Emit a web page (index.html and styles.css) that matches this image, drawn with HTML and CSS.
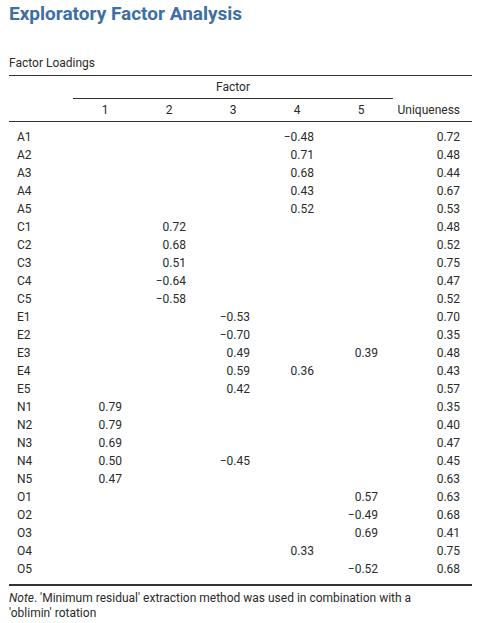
FILE: index.html
```html
<!DOCTYPE html>
<html lang="en">
<head>
    <meta charset="UTF-8">
    <meta name="viewport" content="width=device-width, initial-scale=1.0">
    <title>Exploratory Factor Analysis</title>
    <link rel="stylesheet" href="styles.css">
</head>
<body>
    <div class="analysis">
        <h1 class="title">Exploratory Factor Analysis</h1>
        <div class="caption">Factor Loadings</div>
        <table class="loadings">
            <colgroup>
                <col class="col-label">
                <col class="col-factor"><col class="col-factor"><col class="col-factor"><col class="col-factor"><col class="col-factor">
                <col class="col-uniq">
            </colgroup>
            <thead>
                <tr class="group-row">
                    <th></th>
                    <th colspan="5" class="group">Factor</th>
                    <th></th>
                </tr>
                <tr class="head-row">
                    <th></th>
                    <th>1</th><th>2</th><th>3</th><th>4</th><th>5</th>
                    <th>Uniqueness</th>
                </tr>
            </thead>
            <tbody>
                <tr><td>A1</td><td></td><td></td><td></td><td>−0.48</td><td></td><td>0.72</td></tr>
                <tr><td>A2</td><td></td><td></td><td></td><td>0.71</td><td></td><td>0.48</td></tr>
                <tr><td>A3</td><td></td><td></td><td></td><td>0.68</td><td></td><td>0.44</td></tr>
                <tr><td>A4</td><td></td><td></td><td></td><td>0.43</td><td></td><td>0.67</td></tr>
                <tr><td>A5</td><td></td><td></td><td></td><td>0.52</td><td></td><td>0.53</td></tr>
                <tr><td>C1</td><td></td><td>0.72</td><td></td><td></td><td></td><td>0.48</td></tr>
                <tr><td>C2</td><td></td><td>0.68</td><td></td><td></td><td></td><td>0.52</td></tr>
                <tr><td>C3</td><td></td><td>0.51</td><td></td><td></td><td></td><td>0.75</td></tr>
                <tr><td>C4</td><td></td><td>−0.64</td><td></td><td></td><td></td><td>0.47</td></tr>
                <tr><td>C5</td><td></td><td>−0.58</td><td></td><td></td><td></td><td>0.52</td></tr>
                <tr><td>E1</td><td></td><td></td><td>−0.53</td><td></td><td></td><td>0.70</td></tr>
                <tr><td>E2</td><td></td><td></td><td>−0.70</td><td></td><td></td><td>0.35</td></tr>
                <tr><td>E3</td><td></td><td></td><td>0.49</td><td></td><td>0.39</td><td>0.48</td></tr>
                <tr><td>E4</td><td></td><td></td><td>0.59</td><td>0.36</td><td></td><td>0.43</td></tr>
                <tr><td>E5</td><td></td><td></td><td>0.42</td><td></td><td></td><td>0.57</td></tr>
                <tr><td>N1</td><td>0.79</td><td></td><td></td><td></td><td></td><td>0.35</td></tr>
                <tr><td>N2</td><td>0.79</td><td></td><td></td><td></td><td></td><td>0.40</td></tr>
                <tr><td>N3</td><td>0.69</td><td></td><td></td><td></td><td></td><td>0.47</td></tr>
                <tr><td>N4</td><td>0.50</td><td></td><td>−0.45</td><td></td><td></td><td>0.45</td></tr>
                <tr><td>N5</td><td>0.47</td><td></td><td></td><td></td><td></td><td>0.63</td></tr>
                <tr><td>O1</td><td></td><td></td><td></td><td></td><td>0.57</td><td>0.63</td></tr>
                <tr><td>O2</td><td></td><td></td><td></td><td></td><td>−0.49</td><td>0.68</td></tr>
                <tr><td>O3</td><td></td><td></td><td></td><td></td><td>0.69</td><td>0.41</td></tr>
                <tr><td>O4</td><td></td><td></td><td></td><td>0.33</td><td></td><td>0.75</td></tr>
                <tr><td>O5</td><td></td><td></td><td></td><td></td><td>−0.52</td><td>0.68</td></tr>
            </tbody>
        </table>
        <p class="note"><em>Note</em>. 'Minimum residual' extraction method was used in combination with a 'oblimin' rotation</p>
    </div>
</body>
</html>
```

FILE: styles.css
```css
body {
    margin: 0;
    padding: 0;
    background-color: #ffffff;
    color: #2b2b2b;
    font-family: Roboto, "Liberation Sans", sans-serif;
    font-size: 12px;
}

.analysis {
    width: 463px;
    padding: 0 14px 0 9px;
}

.title {
    margin: 3px 0 0;
    font-size: 19px;
    line-height: 22px;
    font-weight: bold;
    color: #3d6ea6;
}

.caption {
    margin-top: 31px;
    line-height: 15px;
    padding-bottom: 4px;
}

.loadings {
    width: 463px;
    border-collapse: collapse;
    table-layout: fixed;
    border-top: 1px solid #333;
    border-bottom: 2px solid #333;
}

.col-label {
    width: 64px;
}

.col-factor {
    width: 64px;
}

.col-uniq {
    width: 79px;
}

.loadings th {
    font-weight: normal;
    text-align: center;
    height: 22px;
    padding: 0;
}

.group-row th.group {
    border-bottom: 1px solid #333;
}

.head-row th {
    border-bottom: 1px solid #333;
}

.head-row th:last-child {
    text-align: right;
    padding-right: 12px;
}

.loadings td {
    height: 18px;
    padding: 0 15px 0 0;
    text-align: right;
    line-height: 18px;
}

.loadings td:first-child {
    text-align: left;
    padding: 0 0 0 8px;
}

.loadings td:last-child {
    padding-right: 12px;
}

.loadings tbody tr:first-child td {
    padding-top: 6px;
}

.loadings tbody tr:last-child td {
    padding-bottom: 6px;
}

.note {
    margin: 5px 0 0;
    line-height: 15px;
    padding-right: 20px;
}
```
